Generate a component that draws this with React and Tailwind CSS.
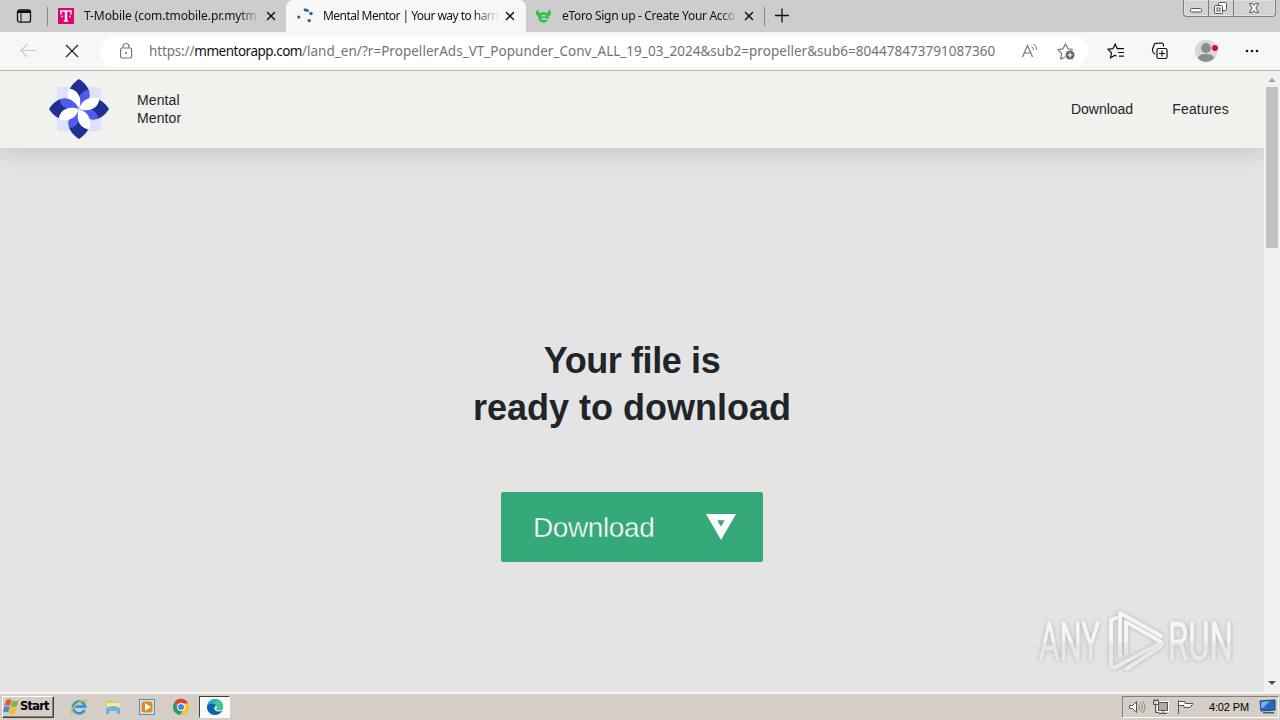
import React from 'react';
import { FiX } from 'react-icons/fi';

const URL_HOST = 'mmentorapp.com';
const URL_REST =
  '/land_en/?r=PropellerAds_VT_Popunder_Conv_ALL_19_03_2024&sub2=propeller&sub6=804478473791087360';

function TMobileIcon() {
  return (
    <svg width="16" height="16" viewBox="0 0 16 16" className="shrink-0">
      <rect width="16" height="16" fill="#e20074" />
      <path d="M3 6.5V3h10v3.5M8 3v10M5.8 13h4.4" stroke="#fff" strokeWidth="1.4" fill="none" />
      <path d="M8 3v10" stroke="#fff" strokeWidth="2.4" />
      <path d="M3.4 8.5h1.6M11 8.5h1.6" stroke="#fff" strokeWidth="1.6" />
    </svg>
  );
}

function LoadingDots() {
  return (
    <svg width="16" height="16" viewBox="0 0 16 16" className="shrink-0" fill="#20639b">
      <circle cx="1.8" cy="9" r="1.6" />
      <circle cx="8.2" cy="1.8" r="1.6" />
      <circle cx="10.4" cy="2.4" r="1.5" />
      <circle cx="14" cy="5.5" r="1.7" />
      <circle cx="12.2" cy="12.6" r="1.7" />
    </svg>
  );
}

function EtoroIcon() {
  return (
    <svg width="17" height="16" viewBox="0 0 17 16" className="shrink-0">
      <path d="M3.5 1C0 3 0 8 4.5 8.5L6 5C4 5 3 3 3.5 1zM13.5 1c3.5 2 3.5 7-1 7.5L11 5c2 0 3-2 2.5-4z" fill="#2fc443" />
      <circle cx="8.5" cy="9.3" r="4" fill="none" stroke="#2fc443" strokeWidth="2.8" />
      <path d="M4.5 9.3h8" stroke="#2fc443" strokeWidth="1.6" />
      <path d="M9 11.2h5" stroke="#cdcdcd" strokeWidth="1.2" />
    </svg>
  );
}

function WindowButtons() {
  return (
    <div className="flex h-[17px] w-[93px] rounded-b-[4px] border border-t-0 border-[#7d7d7d] bg-[#d2d2d2] shadow-[inset_0_0_0_1px_#e2e2e2]">
      <svg width="91" height="16" viewBox="0 0 91 16" fill="none" stroke="#555">
        <path d="M24.5 0v16M49.5 0v16" stroke="#7d7d7d" />
        <rect x="6.5" y="8.5" width="11" height="3.5" rx="1" fill="#fff" />
        <rect x="34.5" y="2.5" width="8" height="8" rx="1" fill="#fff" />
        <rect x="30.5" y="5.5" width="8" height="8" rx="1" fill="#fff" />
        <rect x="33" y="8" width="3" height="3" />
        <path d="M65.5 3.5h3l1.5 2 1.5-2h3L72 8l2.5 4.5h-3l-1.5-2-1.5 2h-3L68 8z" fill="#fff" />
      </svg>
    </div>
  );
}

function TabStrip() {
  return (
    <div className="flex h-8 items-start bg-[#cdcdcd] text-[12px] text-[#111]">
      <div className="flex h-8 w-[47px] items-center justify-end pr-[15px]">
        <svg width="16" height="16" viewBox="0 0 16 16" fill="none" stroke="#111" strokeWidth="1.3">
          <rect x="1.5" y="2" width="13" height="12.2" rx="2" />
          <path d="M2 3.2h12M2 4.4h12" />
          <path d="M5 5v9" strokeWidth="1" />
        </svg>
      </div>
      <div className="mt-[7px] h-[19px] w-px bg-[#888]" />
      <div className="flex h-8 w-[238px] items-center pl-[10px]">
        <TMobileIcon />
        <span className="ml-[10px] w-[176px] shrink-0 whitespace-nowrap tracking-[-0.1px] mask-r-from-88%">
          T-Mobile (com.tmobile.pr.mytm
        </span>
        <FiX className="ml-[4px] size-[14px] shrink-0" strokeWidth={2.5} />
      </div>
      <div className="flex h-8 w-[240px] items-center rounded-t-[7px] bg-[#f7f7f7] pl-[11px]">
        <LoadingDots />
        <span className="ml-[10px] w-[176px] shrink-0 whitespace-nowrap tracking-[-0.54px] mask-r-from-85%">
          Mental Mentor | Your way to harm
        </span>
        <FiX className="ml-[4px] size-[14px] shrink-0" strokeWidth={2.5} />
      </div>
      <div className="flex h-8 w-[238px] items-center pl-[9px]">
        <EtoroIcon />
        <span className="ml-[10px] w-[176px] shrink-0 whitespace-nowrap tracking-[-0.32px] mask-r-from-90%">
          eToro Sign up - Create Your Acco
        </span>
        <FiX className="ml-[4px] size-[14px] shrink-0" strokeWidth={2.5} />
      </div>
      <div className="mt-[7px] h-[19px] w-px bg-[#888]" />
      <svg width="38" height="32" viewBox="0 0 38 32" stroke="#111" strokeWidth="1.3">
        <path d="M10 15.5h14M17 8.5v14" />
      </svg>
      <div className="mr-1 ml-auto">
        <WindowButtons />
      </div>
    </div>
  );
}

function Star({ children, color }) {
  return (
    <svg width="20" height="20" viewBox="0 0 20 20" fill="none" stroke={color} strokeWidth="1.2">
      {children}
    </svg>
  );
}

function Toolbar() {
  return (
    <div className="flex h-[39px] items-center border-b border-[#b5b5b5] bg-[#f7f7f7]">
      <svg width="100" height="38" viewBox="0 0 100 38" fill="none">
        <path d="M36 18.5H21M27.5 12L21 18.5l6.5 6.5" stroke="#c9c9c9" strokeWidth="1.2" />
        <path d="M66 13l12 12M78 13L66 25" stroke="#222" strokeWidth="1.2" />
      </svg>
      <div className="flex h-[31px] w-[988px] items-center rounded-full bg-white pl-[18px] text-[#737373]">
        <svg width="16" height="18" viewBox="0 0 16 18" fill="none" stroke="#777" strokeWidth="1.2">
          <rect x="2.6" y="6" width="11" height="10" rx="1.5" />
          <path d="M5 6V4.5a3 3 0 0 1 6 0V6" />
          <circle cx="8" cy="11" r="1" fill="#777" stroke="none" />
        </svg>
        <span className="ml-[15px] w-[860px] text-[13.5px] whitespace-nowrap">
          <span className="tracking-[-0.15px]">https://</span>
          <span className="tracking-[-0.5px] text-[#111]">{URL_HOST}</span>
          <span className="tracking-[0.03px]">{URL_REST}</span>
        </span>
        <svg width="18" height="18" viewBox="0 0 18 18" fill="none" stroke="#777" className="ml-[12px] shrink-0">
          <path d="M1.5 15L6.5 3.5 11.5 15M3.3 11h6.5" strokeWidth="1.2" />
          <path d="M10.5 4.5q2 1.5 2 3.5M12.5 2q3.3 2.500 3.300 6" />
        </svg>
        <div className="ml-[17px] flex shrink-0">
          <Star color="#777">
            <path d="M9 16l-4.2 2 .8-5.5L2 8.7l5-.9L9.5 3 12 7.800l5 .9" />
            <circle cx="14" cy="14" r="4.5" fill="#666" stroke="none" />
            <path d="M11.5 14h5M14 11.5v5" stroke="#fff" />
          </Star>
        </div>
      </div>
      <div className="flex flex-1 items-center">
        <div className="ml-[18px]">
          <Star color="#111">
            <path d="M10.5 15.2L9 14.300l-4.500 2.500 1-5L2 8.300l5-.7 2.200-4.400 2 4.400h6.800M12 11.500h6M13 15.200h5" />
          </Star>
        </div>
        <svg width="20" height="20" viewBox="0 0 20 20" fill="none" stroke="#111" strokeWidth="1.2" className="ml-[24px]">
          <rect x="7" y="7.5" width="10" height="10" rx="1.5" />
          <path d="M12 9.500v6M9 12.500h6M5 13.500L3 11a3 3 0 0 1-.5-2.500L4 4a2 2 0 0 1 2-1.700L11.500 2a2 2 0 0 1 2 2v1.500" />
        </svg>
        <svg width="26" height="24" viewBox="0 0 26 24" className="ml-[24px]">
          <circle cx="12" cy="12" r="11.2" fill="#d8d8d4" />
          <circle cx="12" cy="9" r="5" fill="#8d8d8d" />
          <path d="M4 19.500q0-4.500 8-4.500t8 4.500q-8 7-16 0z" fill="#8d8d8d" />
          <circle cx="21" cy="9" r="3" fill="#dd0d20" />
        </svg>
        <svg width="16" height="16" viewBox="0 0 16 16" fill="#111" className="ml-[24px]">
          <circle cx="3" cy="8" r="1.3" />
          <circle cx="8" cy="8" r="1.3" />
          <circle cx="13" cy="8" r="1.3" />
        </svg>
      </div>
    </div>
  );
}

function Petal({ angle }) {
  return (
    <g transform={`rotate(${angle} 30 30)`}>
      <path d="M30 0C36 4 40.5 9 40.5 16 40.5 22 36 26 30 30 24 26 19.5 22 19.5 16 19.5 9 24 4 30 0z" fill="#202f94" />
      <path d="M39.5 11C42 19 38.500 26 30 30 28.500 24 29 18.500 32 15 34 12.500 36.500 11 39.500 11z" fill="#525bf1" />
      <path d="M19.8 9.500C28 10.500 34 18 30 30 21 27.500 16.500 19 19.800 9.500z" fill="#fff" />
    </g>
  );
}

function SiteHeader() {
  return (
    <header className="relative flex h-[77px] shrink-0 items-center bg-[#f1f1ee] pr-[35px] pb-px pl-[49px] text-[14px] text-[#212529] shadow-[0_6px_22px_rgba(0,0,0,0.13)]">
      <svg width="60" height="60" viewBox="0 0 60 60">
        <rect x="8" y="8" width="44" height="44" rx="2" fill="#dbe2fb" />
        <Petal angle={0} />
        <Petal angle={90} />
        <Petal angle={180} />
        <Petal angle={270} />
      </svg>
      <div className="ml-7 leading-[18px] tracking-[0.1px]">
        Mental
        <br />
        Mentor
      </div>
      <nav className="mt-px ml-auto flex gap-[39px]">
        <span>Download</span>
        <span className="tracking-[0.2px]">Features</span>
      </nav>
    </header>
  );
}

function Watermark() {
  return (
    <div className="absolute right-[24px] bottom-[16px] flex h-[70px] w-[204px] items-center">
      <svg width="204" height="70" viewBox="0 0 204 70" fill="none" className="drop-shadow-[0_0_2px_rgba(0,0,0,0.22)]">
        <defs>
          <linearGradient id="fade" x1="0" y1="0" x2="0" y2="70" gradientUnits="userSpaceOnUse">
            <stop offset="0.5" stopColor="#f5f5f5" />
            <stop offset="0.55" stopColor="#e6e6e6" />
            <stop offset="1" stopColor="#eeeeee" />
          </linearGradient>
        </defs>
        <g fill="url(#fade)" stroke="url(#fade)" strokeWidth="0.8" fontFamily="Roboto" fontSize="53">
          <text x="3" y="54" textLength="61" lengthAdjust="spacingAndGlyphs">ANY</text>
          <text x="132" y="54" textLength="65" lengthAdjust="spacingAndGlyphs">RUN</text>
        </g>
        <g stroke="url(#fade)" strokeWidth="4" strokeLinejoin="round" strokeLinecap="round">
          <path d="M80 12l-5 2v46l4 1.500 44-24M84 49V7l41 23M84 7v42M90 63l34-22q4-3 0-6L90 16M90 16v31" />
        </g>
      </svg>
    </div>
  );
}

function Page() {
  return (
    <div className="flex h-[621px]">
      <main className="relative flex w-[1264px] flex-col overflow-hidden bg-[#e4e4e4] font-['Liberation_Sans',sans-serif]">
        <SiteHeader />
        <h1 className="mt-[189px] text-center text-[36px] leading-[47px] font-bold text-[#212529]">
          <span className="tracking-[-0.4px]">Your file is</span>
          <br />
          ready to download
        </h1>
        <button className="mt-[61px] flex h-[70px] w-[262px] items-center justify-between self-center rounded-[2px] bg-[#35a97a] pr-[27px] pl-8 text-[28px] text-white">
          <span className="mt-[2px] tracking-[-0.4px] [-webkit-text-stroke:0.4px_#35a97a]">Download</span>
          <svg width="30" height="26" viewBox="0 0 30 26">
            <path d="M0 0h30L15 26zM11.3 6.300l3.700 6.500 3.700-6.500z" fill="#fff" fillRule="evenodd" />
          </svg>
        </button>
        <Watermark />
      </main>
      <div className="flex w-4 flex-col items-center bg-[#f1f1f1]">
        <svg width="16" height="16" viewBox="0 0 16 16" fill="#a3a3a3">
          <path d="M4 11l4-4 4 4z" />
        </svg>
        <div className="h-[161px] w-3 bg-[#c1c1c1]" />
        <svg width="16" height="16" viewBox="0 0 16 16" fill="#505050" className="mt-auto">
          <path d="M4 5h8L8 9z" />
        </svg>
      </div>
    </div>
  );
}

function WindowsFlag() {
  return (
    <svg width="17" height="17" viewBox="0 0 17 17" className="-mt-px shrink-0">
      <path d="M3 2q3-1.500 5.500 0L7 8q-3-1.500-5.700 0z" fill="#e65a2b" />
      <path d="M9.200 2.500q3 1.500 6.300 0L13.800 8.500q-3 1.500-6 0z" fill="#78b943" />
      <path d="M1 9q3-1.500 5.800 0L5.200 14.500q-2.700-1.500-5.200 0z" fill="#398edb" />
      <path d="M7.500 9.500q3 1.500 6.200 0L12 15.500q-3 1.500-6 0z" fill="#f5bd2e" />
    </svg>
  );
}

function Taskbar() {
  return (
    <div className="flex h-7 items-center bg-[#d5cec6] font-['DejaVu_Sans',sans-serif] shadow-[inset_0_2px_0_#f7f5f1]">
      <div className="mt-[2px] ml-[2px] flex h-[22px] w-[52px] items-center border border-t-white border-r-[#404040] border-b-[#404040] border-l-white text-black shadow-[inset_-1px_-1px_0_#86807a]">
        <WindowsFlag />
        <span className="text-[11.5px] font-bold tracking-[-0.8px]">Start</span>
      </div>
      <svg width="18" height="18" viewBox="0 0 18 18" fill="none" className="mt-0.5 ml-4">
        <path d="M14.500 12A6 6 0 1 1 15 8.500H4" stroke="#2f9bd7" strokeWidth="2.8" />
        <path d="M2 16C-1 13 8 3 14.500 2q3-.3 1.500 3" stroke="#e7b837" strokeWidth="1.4" />
      </svg>
      <svg width="18" height="18" viewBox="0 0 18 18" className="mt-0.5 ml-4">
        <path d="M2 2h5l1 2h7v9H2z" fill="#e3c76d" />
        <path d="M3 5h13v6H3z" fill="#f8e9a5" />
        <path d="M2 10q7-4 14 0v6h-3v-3H5v3H2z" fill="#65b7df" />
      </svg>
      <svg width="18" height="18" viewBox="0 0 18 18" className="mt-0.5 ml-4">
        <rect x="1.5" y="1.5" width="15" height="15" fill="#cce4f5" stroke="#4f91bd" />
        <rect x="3.500" y="3.500" width="11" height="11" rx="3" fill="#ee8517" />
        <path d="M7 5.200l6 3.800-6 3.800z" fill="#fff" />
      </svg>
      <svg width="18" height="18" viewBox="0 0 18 18" className="mt-0.5 ml-4">
        <path d="M9 9L2 5a8 8 0 0 1 14 0z" fill="#db4437" />
        <path d="M9 9h-.5L2 5a8 8 0 0 0 6 12l4-6z" fill="#2e9d58" />
        <path d="M9 5.500h7.300A8 8 0 0 1 8.500 17l3.500-6z" fill="#f4c531" />
        <circle cx="9" cy="9" r="3.9" fill="#fff" />
        <circle cx="9" cy="9" r="3" fill="#4285f4" />
      </svg>
      <div className="mt-[2px] ml-[9px] flex h-[22px] w-[31px] items-center justify-center border border-t-[#404040] border-r-white border-b-white border-l-[#404040] bg-[#fbfafa]">
        <svg width="18" height="18" viewBox="0 0 18 18">
          <circle cx="9" cy="9" r="8" fill="#1686c9" />
          <path d="M1.500 7C4 0 14-1 16.500 6c2 5-3 7-7 5 2-2 1-5-2-5-2 0-4.500 0-6 1z" fill="#3fcb8c" />
          <path d="M1.300 7C3 2 8 1 11 2.500 9 5 5 5 1.300 7z" fill="#23a9d8" />
          <path d="M1 9c2-5 8-4 9-1-5 0-4 7 6 5-3 5-14 6-15-4z" fill="#105fa8" />
          <path d="M9.500 8c3 0 0 3 1 4 3 1 5 0 6-1l-.8 1.700c-5 2-8.700-.7-6.200-4.700z" fill="#fff" />
        </svg>
      </div>
      <div className="mt-[2px] mr-[1px] ml-auto flex h-[22px] w-[157px] items-center border border-t-[#85807a] border-r-white border-b-white border-l-[#85807a]">
        <svg width="74" height="20" viewBox="0 0 74 20" fill="none" stroke="#555">
          <path d="M6.500 8.500h3l4-4v11l-4-4h-3z" fill="#fff" />
          <path d="M15.500 7.500q2 2.500 0 5M17.500 5.500q3.500 4.500 0 9M19.500 4q5 6 0 12" stroke="#888" />
          <rect x="35.500" y="5.500" width="9" height="8" fill="#aaa" stroke="#fff" strokeWidth="3" />
          <rect x="35.500" y="5.500" width="9" height="8" fill="#aaa" />
          <path d="M36 16.500h8M40 14v2M32.500 7v8.500H36M30.500 3.500h5v4h-5zM31.500 2v2M34.500 2v2" />
          <path d="M55.500 17V3.500M56 4.500h6v2h8l-3 4h-6v-2h-5" fill="#fff" />
        </svg>
        <span className="ml-[12px] w-[43px] font-['Liberation_Sans',sans-serif] text-[11px] tracking-[-0.15px] whitespace-nowrap text-black">4:02 PM</span>
        <svg width="18" height="16" viewBox="0 0 18 16" className="ml-[7px]">
          <path d="M1 2l15-1v10L2 12z" fill="#2869bf" stroke="#174377" />
          <path d="M2 3l9-1-7 7H2z" fill="#6fb2ef" />
          <path d="M4 13h11v1.500H4z" fill="#45617f" />
        </svg>
      </div>
    </div>
  );
}

export default function App() {
  return (
    <div className="h-[720px] w-[1280px] overflow-hidden bg-[#e4e4e4] font-['Noto_Sans',sans-serif]">
      <TabStrip />
      <Toolbar />
      <Page />
      <Taskbar />
    </div>
  );
}
